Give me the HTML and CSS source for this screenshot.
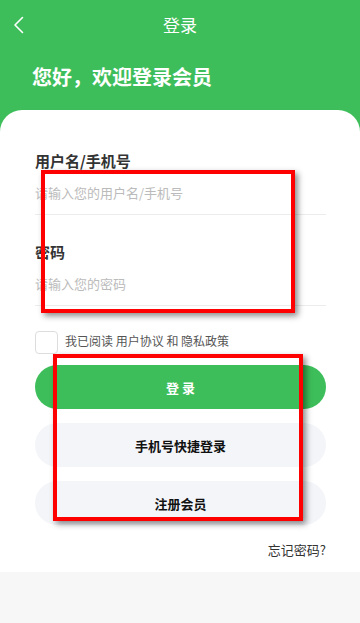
FILE: index.html
```html
<!DOCTYPE html>
<html lang="zh-CN">
<head>
<meta charset="utf-8">
<title>登录</title>
<link rel="stylesheet" href="styles.css">
</head>
<body>
<div class="page">
  <header class="top">
    <nav class="nav">
      <svg class="back" width="12" height="18" viewBox="0 0 12 18"><path d="M9.5 1.5 L2 9 L9.5 16.5" fill="none" stroke="#fff" stroke-width="1.6" stroke-linecap="round" stroke-linejoin="round"/></svg>
      <span class="nav-title">登录</span>
    </nav>
    <h1 class="hello">您好，欢迎登录会员</h1>
  </header>
  <main class="card">
    <div class="field">
      <div class="label">用户名/手机号</div>
      <div class="input">请输入您的用户名/手机号</div>
    </div>
    <div class="field field-second">
      <div class="label">密码</div>
      <div class="input">请输入您的密码</div>
    </div>
    <div class="agree">
      <span class="box"></span>
      <span class="agree-text">我已阅读 用户协议 和 隐私政策</span>
    </div>
    <div class="buttons">
      <div class="btn btn-primary">登 录</div>
      <div class="btn btn-gray">手机号快捷登录</div>
      <div class="btn btn-gray">注册会员</div>
    </div>
    <div class="forget">忘记密码?</div>
  </main>
  <div class="mark mark-one"></div>
  <div class="mark mark-two"></div>
</div>
</body>
</html>
```
FILE: styles.css
```css
html, body {
  margin: 0;
  padding: 0;
}
body {
  width: 360px;
  height: 623px;
  background: #f7f7f7;
  font-family: "Noto Sans CJK SC", "Noto Sans", sans-serif;
  overflow: hidden;
}
.page {
  position: relative;
  width: 360px;
  height: 623px;
}
.top {
  background: #3dbe5a;
  height: 132px;
  box-sizing: border-box;
}
.nav {
  height: 50px;
  display: flex;
  align-items: center;
  justify-content: center;
  position: relative;
}
.back {
  position: absolute;
  left: 13px;
  top: 16px;
}
.nav-title {
  color: #fff;
  font-size: 17px;
  line-height: 24px;
}
.hello {
  margin: 13px 0 0 32px;
  color: #fff;
  font-size: 20px;
  font-weight: bold;
  line-height: 28px;
}
.card {
  margin-top: -22px;
  background: #fff;
  border-radius: 22px 22px 0 0;
  height: 462px;
  box-sizing: border-box;
  padding: 41px 34px 0 35px;
}
.label {
  font-size: 15px;
  font-weight: bold;
  color: #333;
  line-height: 20px;
}
.input {
  height: 43px;
  line-height: 43px;
  font-size: 13px;
  color: #bbb;
  border-bottom: 1px solid #ececec;
}
.field-second {
  margin-top: 27px;
}
.agree {
  display: flex;
  align-items: center;
  margin-top: 25px;
  height: 23px;
}
.box {
  width: 21px;
  height: 21px;
  border: 1px solid #ddd;
  border-radius: 4px;
  flex: none;
}
.agree-text {
  margin-left: 7px;
  font-size: 12px;
  color: #555;
  line-height: 16px;
  margin-top: -3px;
}
.buttons {
  margin-top: 11px;
  display: flex;
  flex-direction: column;
  gap: 14px;
}
.btn {
  height: 44px;
  border-radius: 22px;
  display: flex;
  align-items: center;
  justify-content: center;
  font-size: 13px;
  font-weight: bold;
}
.btn-primary {
  background: #3dbe5a;
  color: #fff;
}
.btn-gray {
  background: #f4f5f9;
  color: #111;
}
.forget {
  margin-top: 16px;
  text-align: right;
  font-size: 13px;
  color: #333;
  line-height: 18px;
}
.mark {
  position: absolute;
  border: 4px solid #ff0000;
  box-sizing: border-box;
  box-shadow: 3px 3px 6px rgba(0, 0, 0, 0.45);
}
.mark-one {
  left: 41px;
  top: 170px;
  width: 254px;
  height: 143px;
}
.mark-two {
  left: 53px;
  top: 354px;
  width: 250px;
  height: 167px;
}
```
